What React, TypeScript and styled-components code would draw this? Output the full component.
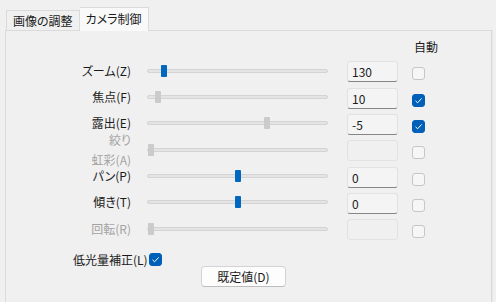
import React from "react";
import styled, {createGlobalStyle} from "styled-components";

const GlobalStyle = createGlobalStyle`
  html, body {
    margin: 0;
    padding: 0;
    background: #f0f0f0;
    overflow: hidden;
  }
  body {
    font-family: "Noto Sans CJK JP", "Noto Sans", sans-serif;
    font-size: 12px;
    color: #1b1b1b;
    font-feature-settings: "palt";
  }
`

type Control = {
    label: string[]
    pos: number
    value: string
    auto: boolean
    active: boolean
    disabled: boolean
}

const controls: Control[] = [
    {label: ['ズーム(Z)'], pos: 0.074, value: '130', auto: false, active: true, disabled: false},
    {label: ['焦点(F)'], pos: 0.04, value: '10', auto: true, active: false, disabled: false},
    {label: ['露出(E)'], pos: 0.663, value: '-5', auto: true, active: false, disabled: false},
    {label: ['絞り', '虹彩(A)'], pos: 0, value: '', auto: false, active: false, disabled: true},
    {label: ['パン(P)'], pos: 0.497, value: '0', auto: false, active: true, disabled: false},
    {label: ['傾き(T)'], pos: 0.497, value: '0', auto: false, active: true, disabled: false},
    {label: ['回転(R)'], pos: 0, value: '', auto: false, active: false, disabled: true},
]

const Check = ({checked}: { checked: boolean }) => (
    <CheckBox $checked={checked}>
        {checked && (
            <svg width="9" height="9" viewBox="0 0 9 9">
                <polyline points="1.5,4.8 3.6,6.8 7.6,2.4" fill="none" stroke="#ffffff" strokeWidth="1"/>
            </svg>
        )}
    </CheckBox>
)

export default function App() {
    return (
        <Window>
            <GlobalStyle/>
            <TabBar>
                <Tab>画像の調整</Tab>
                <Tab $active>カメラ制御</Tab>
            </TabBar>
            <Panel>
                <Grid>
                    <span/>
                    <span/>
                    <span/>
                    <AutoHeader>自動</AutoHeader>
                    {controls.map((c) => (
                        <React.Fragment key={c.label.join()}>
                            <Label $disabled={c.disabled}>
                                {c.label.map((l) => <div key={l}>{l}</div>)}
                            </Label>
                            <SliderCell>
                                <Track>
                                    <Thumb $active={c.active}
                                           style={{left: `${c.pos * 175}px`}}/>
                                </Track>
                            </SliderCell>
                            <ValueBox $disabled={c.disabled}>{c.value}</ValueBox>
                            <CheckCell>
                                <Check checked={c.auto}/>
                            </CheckCell>
                        </React.Fragment>
                    ))}
                </Grid>
                <LowLight>
                    <span>低光量補正(L)</span>
                    <Check checked/>
                </LowLight>
                <DefaultButton>既定値(D)</DefaultButton>
            </Panel>
        </Window>
    )
}

const Window = styled.div`
  padding: 7px 4px 0 5px;
`

const TabBar = styled.div`
  display: flex;
  align-items: flex-end;
  height: 23px;
  padding-left: 1px;
`

const Tab = styled.div<{ $active?: boolean }>`
  display: flex;
  align-items: center;
  box-sizing: border-box;
  padding: 0 6px;
  height: ${p => p.$active ? '24px' : '20px'};
  margin-bottom: ${p => p.$active ? '-1px' : '0'};
  padding-bottom: ${p => p.$active ? '3px' : '0'};
  background: ${p => p.$active ? '#f9f9f9' : '#f0f0f0'};
  border: 1px solid #dadada;
  border-bottom: none;
  border-left: ${p => p.$active ? 'none' : '1px solid #dadada'};
  position: relative;
  z-index: ${p => p.$active ? 1 : 0};
  color: #1b1b1b;
  white-space: nowrap;
`

const Panel = styled.div`
  box-sizing: border-box;
  height: 272px;
  border: 1px solid #dadada;
  border-bottom: none;
  box-shadow: 1px 0 0 #e8e8e8;
  background: #f0f0f0;
  padding-top: 7px;
`

const Grid = styled.div`
  display: grid;
  grid-template-columns: 141px 200px 65px 30px;
  grid-template-rows: 18px repeat(7, 21px);
  row-gap: 5.33px;
  align-items: center;
`

const AutoHeader = styled.div`
  padding-left: 2px;
  line-height: 18px;
`

const Label = styled.div<{ $disabled: boolean }>`
  text-align: right;
  padding-right: 16px;
  line-height: 20px;
  margin-top: -2px;
  color: ${p => p.$disabled ? '#a3a3a3' : '#1b1b1b'};
  white-space: nowrap;
`

const SliderCell = styled.div`
  padding-right: 19px;
  height: 21px;
  display: flex;
  align-items: center;
  margin-top: -2px;
`

const Track = styled.div`
  position: relative;
  box-sizing: border-box;
  width: 181px;
  height: 4px;
  background: #e4e4e4;
  border: 1px solid #d4d4d4;
  border-radius: 2px;
`

const Thumb = styled.div<{ $active: boolean }>`
  position: absolute;
  top: -5px;
  width: 6px;
  height: 12px;
  border-radius: 1px;
  background: ${p => p.$active ? '#0067c0' : '#cbcbcb'};
`

const ValueBox = styled.div<{ $disabled: boolean }>`
  box-sizing: border-box;
  width: 51px;
  height: 21px;
  padding: 0 4px;
  line-height: 20px;
  background: ${p => p.$disabled ? '#f0f0f0' : '#f4f4f4'};
  border: 1px solid #e2e2e2;
  border-bottom-color: ${p => p.$disabled ? '#e2e2e2' : '#868686'};
  border-radius: 3px;
  color: #1b1b1b;
`

const CheckCell = styled.div`
  display: flex;
  align-items: center;
  margin-top: 4px;
`

const CheckBox = styled.div<{ $checked: boolean }>`
  box-sizing: border-box;
  width: 13px;
  height: 13px;
  border-radius: 3px;
  display: flex;
  align-items: center;
  justify-content: center;
  background: ${p => p.$checked ? '#005fb8' : '#f6f6f6'};
  border: 1px solid ${p => p.$checked ? '#005fb8' : '#c6c6c6'};
`

const LowLight = styled.div`
  display: flex;
  align-items: center;
  gap: 1px;
  margin-top: 13px;
  padding-left: 67px;
  height: 13px;
`

const DefaultButton = styled.div`
  box-sizing: border-box;
  width: 85px;
  height: 21px;
  margin-left: 195px;
  display: flex;
  align-items: center;
  justify-content: center;
  background: #fdfdfd;
  border: 1px solid #d3d3d3;
  border-bottom-color: #bdbdbd;
  border-radius: 4px;
  color: #1b1b1b;
`
